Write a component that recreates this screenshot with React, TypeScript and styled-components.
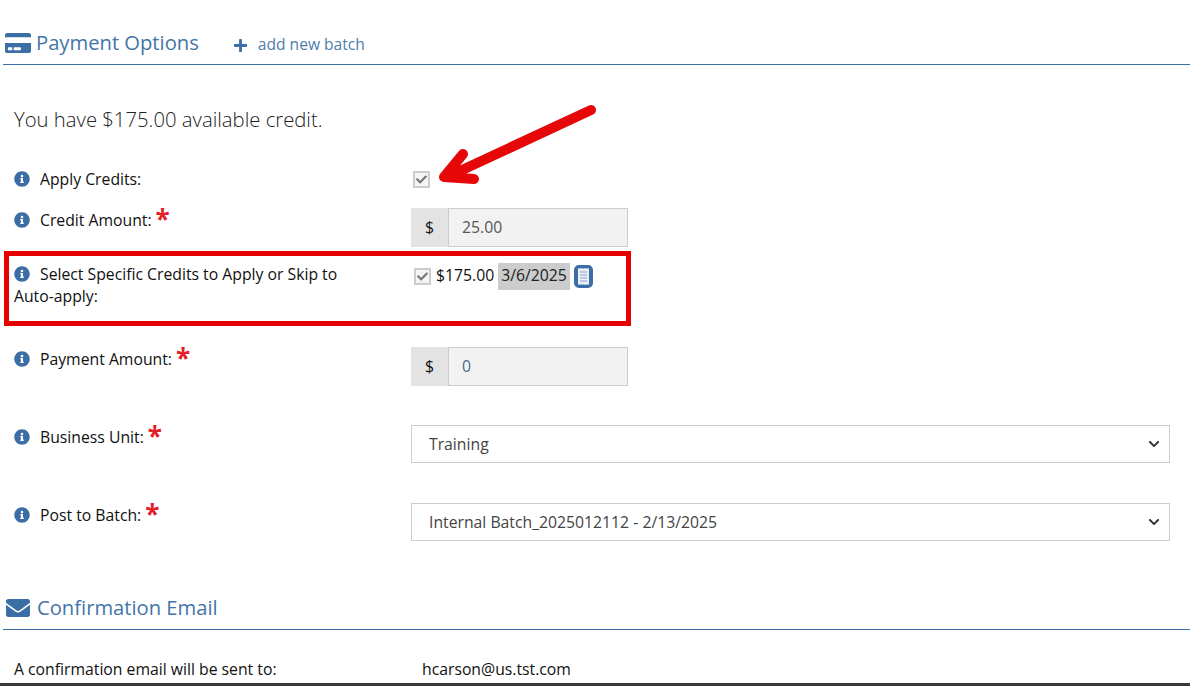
import styled, { createGlobalStyle } from "styled-components";
import { FaCreditCard, FaEnvelope, FaInfoCircle, FaPlus, FaCheck, FaChevronDown } from "react-icons/fa";
import type { ReactNode } from "react";

const GlobalStyle = createGlobalStyle`
  html, body {
    margin: 0;
    padding: 0;
    background: #fff;
  }
  body {
    font-family: "Open Sans", "Liberation Sans", sans-serif;
    font-size: 15.75px;
    color: #111;
  }
`;

const Field = ({ label, required, children, height }: { label: ReactNode; required?: boolean; children?: ReactNode; height: number }) => (
  <Row $height={height}>
    <Label $required={required}>
      <InfoIcon />
      {label}
      {required && <Star>*</Star>}
    </Label>
    <Control>{children}</Control>
  </Row>
);

const ReceiptIcon = () => (
  <ReceiptSvg viewBox="0 0 19 23" width="19" height="23">
    <rect x="0" y="0" width="19" height="23" rx="5" fill="#3b6ea5" />
    <path
      d="M4 3l1 .8 1-.8 1 .8 1-.8 1.500 .8 1.500-.8 1 .8 1-.8 1 .8 1-.8v17l-1-.8-1 .8-1-.8-1 .8-1.500-.8-1.500 .8-1-.8-1 .8-1-.8-1 .8z"
      fill="#e9eff7"
    />
    <path d="M6 7h7M6 10h7M6 13h7M6 16h7" stroke="#a9bfdc" strokeWidth="1.600" />
  </ReceiptSvg>
);

export default function App() {
  return (
    <Page>
      <GlobalStyle />
      <SectionHeader>
        <CardIcon />
        <SectionTitle>Payment Options</SectionTitle>
        <AddLink>
          <FaPlus size={15} />
          add new batch
        </AddLink>
      </SectionHeader>

      <CreditNote>You have $175.00 available credit.</CreditNote>

      <Field label="Apply Credits:" height={40}>
        <CheckBox $top={3} $left={2}>
          <FaCheck size={11} />
        </CheckBox>
      </Field>

      <Field label="Credit Amount:" required height={55}>
        <InputGroup>
          <Addon>$</Addon>
          <ReadOnlyInput>25.00</ReadOnlyInput>
        </InputGroup>
      </Field>

      <Field label="Select Specific Credits to Apply or Skip to Auto-apply:" height={84}>
        <CreditLine>
          <CheckBox $top={5} $left={3}>
            <FaCheck size={11} />
          </CheckBox>
          <CreditAmount>$175.00</CreditAmount>
          <DateChip>3/6/2025</DateChip>
          <ReceiptIcon />
        </CreditLine>
      </Field>

      <Field label="Payment Amount:" required height={78}>
        <InputGroup>
          <Addon>$</Addon>
          <ReadOnlyInput $blue>0</ReadOnlyInput>
        </InputGroup>
      </Field>

      <Field label="Business Unit:" required height={78}>
        <SelectBox>
          <span>Training</span>
          <FaChevronDown size={12} />
        </SelectBox>
      </Field>

      <Field label="Post to Batch:" required height={82}>
        <SelectBox>
          <span>Internal Batch_2025012112 - 2/13/2025</span>
          <FaChevronDown size={12} />
        </SelectBox>
      </Field>

      <SectionHeader>
        <MailIcon />
        <SectionTitle>Confirmation Email</SectionTitle>
      </SectionHeader>

      <SummaryRow>
        <span>A confirmation email will be sent to:</span>
        <SummaryValue>hcarson@us.tst.com</SummaryValue>
      </SummaryRow>

      <BottomBar />

      <HighlightBox />
      <ArrowSvg viewBox="0 0 1190 686" width="1190" height="686">
        <path
          d="M591 110L447 177M463 154L444 177L474 179"
          fill="none"
          stroke="#e60808"
          strokeWidth="10"
          strokeLinecap="round"
          strokeLinejoin="round"
        />
      </ArrowSvg>
    </Page>
  );
}

const Page = styled.div`
  position: relative;
  display: flex;
  flex-direction: column;
  width: 1190px;
  height: 686px;
  padding-top: 20px;
  box-sizing: border-box;
  overflow: hidden;
`;

const SectionHeader = styled.div`
  display: flex;
  align-items: center;
  height: 42px;
  margin-left: 3px;
  padding: 2px 0 0 2px;
  border-bottom: 1px solid #3b6ea5;
  flex-shrink: 0;
  color: #3b6ea5;
`;

const CardIcon = styled(FaCreditCard)`
  width: 26px;
  height: 24px;
  margin-right: 6px;
`;

const MailIcon = styled(FaEnvelope)`
  width: 24px;
  height: 24px;
  margin: 0 8px 0 1px;
`;

const SectionTitle = styled.div`
  margin: -2px 0 0 -1px;
  font-size: 20.2px;
  color: #4375a8;
`;

const AddLink = styled.div`
  display: flex;
  align-items: center;
  gap: 10px;
  margin: 2px 0 0 34px;
  font-size: 15.6px;
  color: #4f7dab;

  svg {
    color: #3b6ea5;
    margin-top: 3px;
  }
`;

const CreditNote = styled.div`
  height: 103px;
  padding: 40px 0 0 14px;
  box-sizing: border-box;
  font-size: 20.3px;
  font-weight: 300;
  line-height: 28px;
  color: #222;
  flex-shrink: 0;
`;

const Row = styled.div<{ $height: number }>`
  display: grid;
  grid-template-columns: 397px 1fr;
  height: ${(p) => p.$height}px;
  padding-left: 14px;
  flex-shrink: 0;
`;

const Label = styled.div<{ $required?: boolean }>`
  width: 340px;
  padding-top: ${(p) => (p.$required ? "1px" : "0")};
  font-size: 15.75px;
  line-height: 22px;
  color: #111;
`;

const InfoIcon = styled(FaInfoCircle)`
  width: 16px;
  height: 16px;
  margin-right: 10px;
  vertical-align: -2px;
  color: #3b6ea5;
`;

const Star = styled.span`
  display: inline-block;
  margin-left: 4px;
  font-size: 26px;
  font-weight: 700;
  line-height: 20px;
  height: 20px;
  vertical-align: top;
  color: #e3202a;
`;

const Control = styled.div`
  width: 759px;
`;

const CheckBox = styled.div<{ $top: number; $left: number }>`
  display: flex;
  align-items: center;
  justify-content: center;
  width: 17px;
  height: 17px;
  margin: ${(p) => p.$top}px 0 0 ${(p) => p.$left}px;
  box-sizing: border-box;
  border: 2px solid #ccc;
  background: #f4f4f4;
  color: #777;
  flex-shrink: 0;
`;

const InputGroup = styled.div`
  display: flex;
  width: 217px;
  height: 39px;
`;

const Addon = styled.div`
  display: flex;
  align-items: center;
  justify-content: center;
  width: 37px;
  padding-bottom: 2px;
  box-sizing: border-box;
  background: #e3e3e3;
  font-size: 15.75px;
  color: #111;
`;

const ReadOnlyInput = styled.div<{ $blue?: boolean }>`
  flex: 1;
  display: flex;
  align-items: center;
  padding: 0 0 2px 13px;
  box-sizing: border-box;
  border: 1px solid #ccc;
  background: #f2f2f2;
  font-size: 15.75px;
  color: ${(p) => (p.$blue ? "#4a6a8f" : "#555")};
`;

const CreditLine = styled.div`
  display: flex;
  align-items: flex-start;
  height: 27px;
`;

const CreditAmount = styled.span`
  margin-left: 5px;
  font-size: 15.75px;
  line-height: 24px;
  color: #111;
`;

const DateChip = styled.span`
  margin-left: 4px;
  padding: 0 3px;
  background: #ccc;
  font-size: 15.75px;
  line-height: 24px;
  height: 27px;
  color: #222;
`;

const ReceiptSvg = styled.svg`
  margin: 2px 0 0 4px;
`;

const SelectBox = styled.div`
  display: flex;
  align-items: center;
  justify-content: space-between;
  height: 38px;
  padding: 0 9px 0 17px;
  box-sizing: border-box;
  border: 1px solid #ccc;
  font-size: 15.75px;
  color: #444;

  svg {
    color: #333;
  }
`;

const SummaryRow = styled.div`
  display: grid;
  grid-template-columns: 408px 1fr;
  margin-top: 28px;
  padding-left: 14px;
  font-size: 15.75px;
  line-height: 22px;
  color: #111;
  flex-shrink: 0;
`;

const SummaryValue = styled.span`
  font-size: 15.75px;
`;

const BottomBar = styled.div`
  margin-top: auto;
  height: 3px;
  background: #3a3a3a;
  flex-shrink: 0;
`;

const HighlightBox = styled.div`
  position: absolute;
  left: 4px;
  top: 251px;
  width: 627px;
  height: 75px;
  box-sizing: border-box;
  border: 5px solid #e60000;
  pointer-events: none;
`;

const ArrowSvg = styled.svg`
  position: absolute;
  left: 0;
  top: 0;
  pointer-events: none;
`;
